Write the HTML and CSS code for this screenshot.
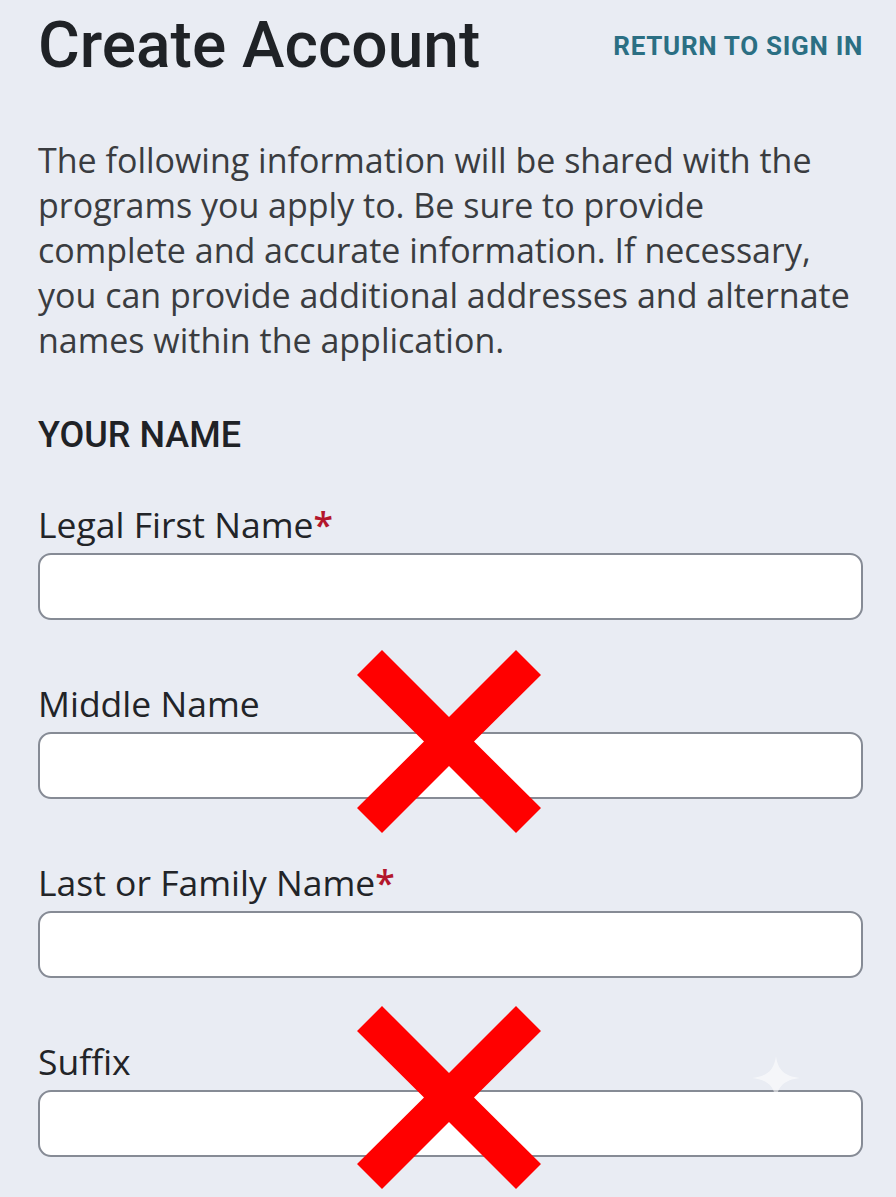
FILE: index.html
```html
<!DOCTYPE html>
<html>

<head>
    <meta charset="utf-8" />
    <title>Create Account</title>
    <link rel="stylesheet" href="styles.css">
</head>

<body>
    <div class="page">
        <div class="page-header">
            <h1 class="page-title">Create Account</h1>
            <a class="return-link" href="#">RETURN TO SIGN IN</a>
        </div>
        <p class="intro-text">The following information will be shared with the programs you apply to. Be sure to provide complete and accurate information. If necessary, you can provide additional addresses and alternate names within the application.</p>
        <h2 class="section-title">YOUR NAME</h2>
        <div class="field-box">
            <label for="firstNameInput">Legal First Name<span class="required">*</span></label>
            <input id="firstNameInput" type="text" class="input-item" />
        </div>
        <div class="field-box">
            <label for="middleNameInput">Middle Name</label>
            <input id="middleNameInput" type="text" class="input-item" />
            <svg class="cross-mark" viewBox="0 0 184 183"><path d="M0 25 L25 0 L92 67 L159 0 L184 25 L117 91.5 L184 158 L159 183 L92 116 L25 183 L0 158 L67 91.5 Z" /></svg>
        </div>
        <div class="field-box">
            <label for="lastNameInput">Last or Family Name<span class="required">*</span></label>
            <input id="lastNameInput" type="text" class="input-item" />
        </div>
        <div class="field-box">
            <label for="suffixInput">Suffix</label>
            <input id="suffixInput" type="text" class="input-item" />
            <svg class="cross-mark cross-low" viewBox="0 0 184 183"><path d="M0 25 L25 0 L92 67 L159 0 L184 25 L117 91.5 L184 158 L159 183 L92 116 L25 183 L0 158 L67 91.5 Z" /></svg>
            <svg class="sparkle" viewBox="0 0 48 44"><path d="M24 0 C26 14 32 20 48 22 C32 24 26 30 24 44 C22 30 16 24 0 22 C16 20 22 14 24 0 Z" /></svg>
        </div>
    </div>
</body>

</html>
```

FILE: styles.css
```css
html,
body {
    margin: 0;
    background-color: #e9ecf3;
}

.page {
    padding: 14px 33px 40px 38px;
    font-family: "Open Sans", "Noto Sans", sans-serif;
    color: #26282c;
}

.page-header {
    display: flex;
    justify-content: space-between;
    align-items: center;
}

.page-title {
    margin: 0;
    font-family: Roboto, "Liberation Sans", sans-serif;
    font-weight: 500;
    font-size: 64px;
    line-height: 64px;
    color: #1f2226;
}

.return-link {
    font-family: Roboto, "Liberation Sans", sans-serif;
    font-weight: 700;
    font-size: 26px;
    letter-spacing: 0.7px;
    color: #2b6f83;
    text-decoration: none;
}

.intro-text {
    max-width: 816px;
    margin: 60px 0 0 0;
    font-size: 34px;
    line-height: 45px;
    color: #3a3c40;
}

.section-title {
    margin: 52px 0 0 0;
    font-family: Roboto, "Liberation Sans", sans-serif;
    font-weight: 500;
    font-size: 36px;
    line-height: 40px;
    color: #1f2226;
}

.field-box {
    position: relative;
    margin-top: 49px;
}

.field-box + .field-box {
    margin-top: 63px;
}

.field-box label {
    display: block;
    font-size: 35.5px;
    line-height: 40px;
    margin-bottom: 9px;
    color: #222428;
}

.required {
    color: #b3162c;
    font-weight: 600;
}

.input-item {
    display: block;
    box-sizing: border-box;
    width: 100%;
    height: 67px;
    border: 2px solid #868b95;
    border-radius: 13px;
    background-color: #ffffff;
}

.cross-mark {
    position: absolute;
    left: 319px;
    top: -33px;
    width: 184px;
    height: 183px;
    fill: #ff0000;
}

.cross-low {
    top: -35px;
}

.sparkle {
    position: absolute;
    left: 714px;
    top: 15px;
    width: 48px;
    height: 44px;
    fill: #ffffff;
    opacity: 0.55;
}
```
